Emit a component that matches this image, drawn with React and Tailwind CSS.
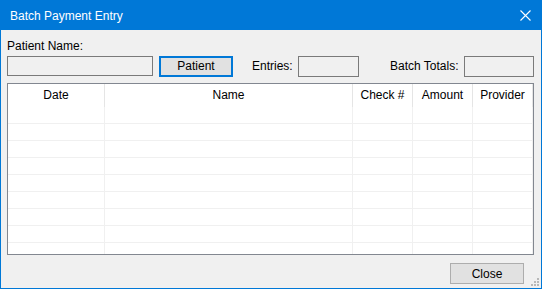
import React from "react";

const cols = [
  { label: "Date", w: "w-[97px]" },
  { label: "Name", w: "w-[248px]" },
  { label: "Check #", w: "w-[60px]" },
  { label: "Amount", w: "w-[60px]" },
  { label: "Provider", w: "w-[60px]" },
];

const rows = Array.from({ length: 9 });

export default function App() {
  return (
    <div
      className="w-[542px] h-[289px] flex flex-col bg-[#0078d7] px-px pb-px overflow-hidden text-[12px] text-black"
      style={{ fontFamily: '"Liberation Sans", Arial, sans-serif' }}
    >
      {/* title bar */}
      <div className="h-[30px] shrink-0 flex items-center justify-between pl-[9px] pr-[10px] text-white">
        <span className="text-[12px] pt-[1px]">Batch Payment Entry</span>
        <svg width="11" height="11" viewBox="0 0 11 11" className="mt-[1px]">
          <path d="M0.5 0.5 L10.5 10.5 M10.5 0.5 L0.5 10.5" stroke="white" strokeWidth="1.1" />
        </svg>
      </div>

      {/* client area */}
      <div className="flex-1 bg-[#f0f0f0] flex flex-col pl-[6px] pr-[7px] relative">
        <div className="h-[24px] pt-[9px] leading-[14px]">Patient Name:</div>

        <div className="flex items-center h-[22px] mt-[1px]">
          <div className="w-[146px] h-[20px] border border-[#7a7a7a] bg-[#f0f0f0]" />
          <button className="ml-[6px] w-[74px] h-[21px] border-2 border-[#0078d7] bg-[#e1e1e1] leading-none">
            Patient
          </button>
          <span className="ml-[19px] w-[46px]">Entries:</span>
          <div className="w-[61px] h-[21px] border border-[#7a7a7a] bg-[#f0f0f0]" />
          <span className="ml-[31px] w-[74px]">Batch Totals:</span>
          <div className="ml-auto w-[70px] h-[21px] border border-[#7a7a7a] bg-[#f0f0f0]" />
        </div>

        <div className="mt-[6px] h-[172px] border border-[#828790] bg-white overflow-hidden">
          <div className="flex h-[23px]">
            {cols.map((c) => (
              <div
                key={c.label}
                className={`${c.w} shrink-0 flex items-center justify-center border-r border-[#e5e5e5] pb-[1px]`}
              >
                {c.label}
              </div>
            ))}
          </div>
          {rows.map((_, i) => (
            <div key={i} className="flex h-[17px]">
              {cols.map((c) => (
                <div
                  key={c.label}
                  className={`${c.w} shrink-0 border-r border-b border-[#f0f0f0]`}
                />
              ))}
            </div>
          ))}
        </div>

        <div className="flex justify-end mt-[8px] pr-[10px]">
          <button className="w-[74px] h-[21px] border border-[#adadad] bg-[#e1e1e1] leading-none text-[12px]">
            Close
          </button>
        </div>

        {/* size grip */}
        <svg width="10" height="10" viewBox="0 0 10 10" className="absolute right-[1px] bottom-[1px]">
          {[
            [8, 2], [8, 5], [5, 5], [8, 8], [5, 8], [2, 8],
          ].map(([x, y]) => (
            <rect key={`${x}-${y}`} x={x - 1} y={y - 1} width="2" height="2" fill="#b8b8b8" />
          ))}
        </svg>
      </div>
    </div>
  );
}
